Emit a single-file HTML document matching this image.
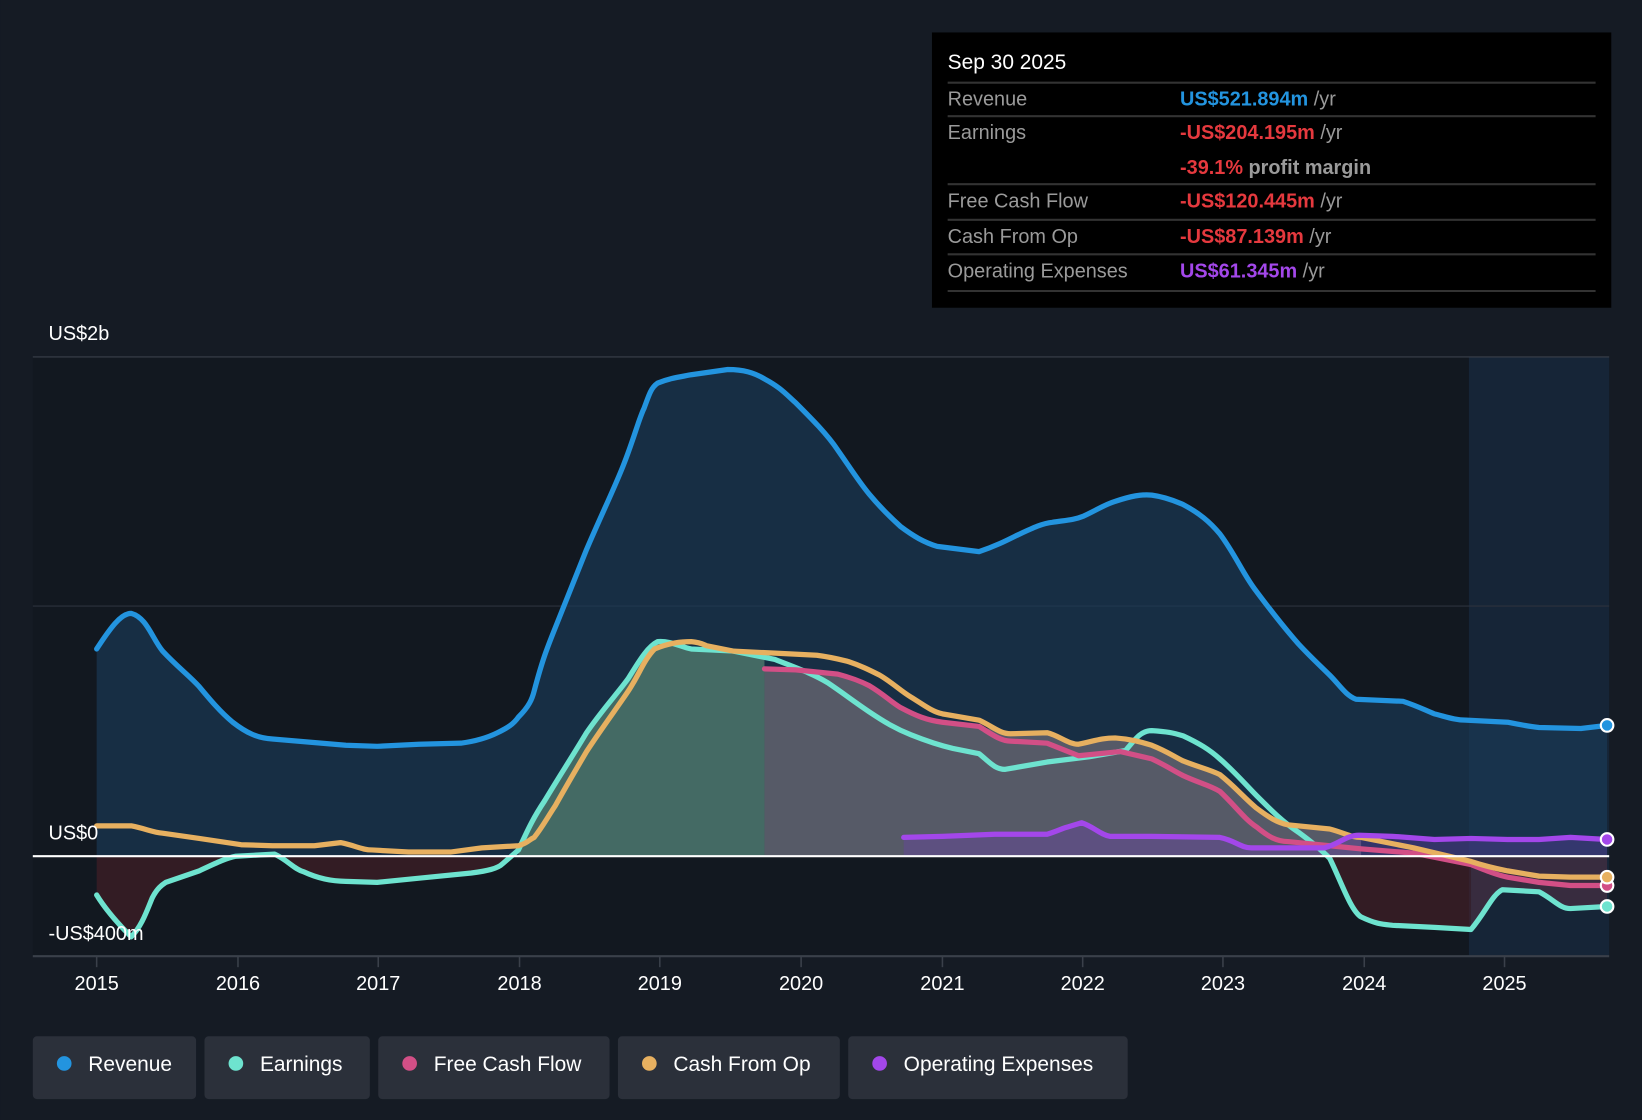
<!DOCTYPE html>
<html><head><meta charset="utf-8"><style>
html,body{margin:0;padding:0;background:#151b24;}
svg{display:block;font-family:"Liberation Sans",Arial,sans-serif;}
</style></head><body>
<svg width="1642" height="1120" viewBox="0 0 1568 1070" xmlns="http://www.w3.org/2000/svg">
<defs>
<clipPath id="above"><rect x="0" y="0" width="1568" height="818"/></clipPath>
<clipPath id="below"><rect x="0" y="818" width="1568" height="300"/></clipPath>
<clipPath id="left"><rect x="0" y="0" width="730" height="1070"/></clipPath>
<clipPath id="right"><rect x="730" y="0" width="900" height="1070"/></clipPath>
</defs>
<rect width="1568" height="1070" fill="#151b24"/>
<rect x="31" y="341" width="1506" height="572" fill="#121820"/>
<rect x="1403" y="341" width="134" height="572" fill="#162537"/>
<line x1="31" y1="341" x2="1537" y2="341" stroke="#3a404a" stroke-width="1"/>
<line x1="31" y1="579" x2="1537" y2="579" stroke="#2c323c" stroke-width="1"/>

<!-- revenue fill -->
<path d="M92,620 C105,600 115,586 125,586 C140,590 145,610 155,622 C170,638 180,645 190,656 C200,668 210,680 222,690 C235,700 245,705 260,706 L295,709 L330,712 L360,713 L400,711 L440,710 C455,708 465,705 475,700 C485,695 490,692 495,685 C505,675 508,668 510,660 C518,630 522,620 530,600 L560,525 C575,490 585,470 595,445 C605,420 610,400 615,390 C620,376 622,370 628,366 C640,361 650,360 660,358 L695,353 C710,353 720,356 730,362 C745,370 750,376 760,385 C775,400 790,415 800,430 C812,447 820,460 830,472 C840,484 850,494 860,503 C872,512 882,518 895,522 L935,527 C950,522 960,517 970,512 C985,505 995,500 1005,499 C1018,497 1025,497 1035,493 C1048,487 1055,482 1065,479 C1080,474 1090,472 1100,473 C1115,475 1125,480 1130,482 C1145,490 1155,498 1165,510 C1180,530 1188,550 1200,565 C1215,585 1225,598 1240,615 C1252,628 1262,637 1270,645 C1280,655 1285,664 1295,668 L1340,670 C1355,675 1360,678 1370,682 C1382,685 1390,688 1400,688 L1440,690 C1455,693 1460,694 1470,695 L1510,696 L1535,693 L1535,818 L92,818 Z" fill="#1a3a58" fill-opacity="0.65"/>

<!-- earnings fill -->
<g clip-path="url(#above)">
<path id="earnfill" d="M92,818 L495,812 C505,790 510,780 520,765 C535,740 545,725 560,700 C575,678 590,662 600,648 C610,632 618,618 628,613 C640,612 650,618 660,620 L700,622 L740,630 C760,638 775,643 790,652 C805,662 815,670 830,680 C845,690 855,696 870,702 C885,708 897,712 910,715 L935,720 L960,735 L1000,728 L1040,723 L1075,717 C1085,705 1090,698 1100,698 C1115,699 1120,700 1130,703 C1145,710 1155,716 1165,725 C1180,738 1190,750 1200,760 C1215,775 1225,785 1240,795 C1255,806 1262,812 1270,820 L1270,818 Z" fill="none"/>
</g>
<g clip-path="url(#left)">
<path d="M495,818 L495,812 C505,790 510,780 520,765 C535,740 545,725 560,700 C575,678 590,662 600,648 C610,632 618,618 628,613 C640,612 650,618 660,620 L700,622 L740,630 L740,818 Z" fill="#6a9d7f" fill-opacity="0.55"/>
</g>
<g clip-path="url(#right)">
<path d="M730,639 L760,640 L800,644 C815,648 822,651 830,655 C845,664 850,670 860,676 C875,684 885,688 900,690 L935,694 L965,701 L1000,700 L1030,711 L1065,705 C1080,706 1090,709 1100,712 C1115,718 1120,722 1130,727 C1145,733 1155,735 1165,740 C1180,752 1188,762 1200,772 C1212,781 1220,786 1230,788 L1270,792 L1300,800 L1300,818 L730,818 Z" fill="#8a7f85" fill-opacity="0.55"/>
</g>
<!-- opex fill -->
<path d="M863,800 L900,799 L950,797 L1000,797 C1010,794 1015,791 1020,790 L1033,786 C1045,790 1050,797 1060,799 L1100,799 L1165,800 C1180,803 1185,810 1195,810 L1265,810 C1280,806 1285,798 1298,798 L1330,799 L1370,802 L1405,801 L1440,802 L1470,802 L1500,800 L1535,802 L1535,818 L863,818 Z" fill="#6a3fb0" fill-opacity="0.35"/>
<!-- negative fills -->
<g clip-path="url(#below)">
<path d="M92,818 L92,855 C100,868 110,880 125,895 C135,885 140,870 145,858 C150,848 155,845 158,843 L190,832 C205,825 215,820 225,818 L262,816 C275,822 280,830 290,833 C305,840 320,842 330,842 L360,843 L400,839 L450,834 C465,832 475,830 480,825 L495,812 Z" fill="#4a1f28" fill-opacity="0.6"/>
<path d="M1260,810 C1268,818 1275,830 1285,850 C1292,866 1295,874 1300,876 C1315,883 1320,883 1330,884 L1370,886 L1405,888 L1405,818 Z" fill="#4a1f28" fill-opacity="0.6"/>
<path d="M1405,888 C1420,870 1425,855 1435,850 L1470,852 C1485,860 1490,868 1500,868 L1535,866 L1535,818 L1405,818 Z" fill="#5a3348" fill-opacity="0.5"/>
</g>

<!-- lines -->
<g fill="none" stroke-width="5" stroke-linejoin="round" stroke-linecap="round">
<path d="M92,620 C105,600 115,586 125,586 C140,590 145,610 155,622 C170,638 180,645 190,656 C200,668 210,680 222,690 C235,700 245,705 260,706 L295,709 L330,712 L360,713 L400,711 L440,710 C455,708 465,705 475,700 C485,695 490,692 495,685 C505,675 508,668 510,660 C518,630 522,620 530,600 L560,525 C575,490 585,470 595,445 C605,420 610,400 615,390 C620,376 622,370 628,366 C640,361 650,360 660,358 L695,353 C710,353 720,356 730,362 C745,370 750,376 760,385 C775,400 790,415 800,430 C812,447 820,460 830,472 C840,484 850,494 860,503 C872,512 882,518 895,522 L935,527 C950,522 960,517 970,512 C985,505 995,500 1005,499 C1018,497 1025,497 1035,493 C1048,487 1055,482 1065,479 C1080,474 1090,472 1100,473 C1115,475 1125,480 1130,482 C1145,490 1155,498 1165,510 C1180,530 1188,550 1200,565 C1215,585 1225,598 1240,615 C1252,628 1262,637 1270,645 C1280,655 1285,664 1295,668 L1340,670 C1355,675 1360,678 1370,682 C1382,685 1390,688 1400,688 L1440,690 C1455,693 1460,694 1470,695 L1510,696 L1535,693" stroke="#2394df"/>
<path d="M92,855 C100,868 110,880 125,895 C135,885 140,870 145,858 C150,848 155,845 158,843 L190,832 C205,825 215,820 225,818 L262,816 C275,822 280,830 290,833 C305,840 320,842 330,842 L360,843 L400,839 L450,834 C465,832 475,830 480,825 L495,812 C505,790 510,780 520,765 C535,740 545,725 560,700 C575,678 590,662 600,648 C610,632 618,618 628,613 C640,612 650,618 660,620 L700,622 L740,630 C760,638 775,643 790,652 C805,662 815,670 830,680 C845,690 855,696 870,702 C885,708 897,712 910,715 L935,720 C945,728 950,735 960,735 L1000,728 L1040,723 L1075,717 C1085,705 1090,698 1100,698 C1115,699 1120,700 1130,703 C1145,710 1155,716 1165,725 C1180,738 1190,750 1200,760 C1215,775 1225,785 1240,795 C1255,806 1262,812 1270,820 C1280,840 1290,870 1300,876 C1315,883 1320,883 1330,884 L1370,886 L1405,888 C1420,870 1425,855 1435,850 L1470,852 C1485,860 1490,868 1500,868 L1535,866" stroke="#6ee3cf"/>
<path d="M730,639 L760,640 L800,644 C815,648 822,651 830,655 C845,664 850,670 860,676 C875,684 885,688 900,690 L935,694 C945,700 955,708 965,708 L1000,710 L1030,722 L1070,718 L1100,725 C1115,732 1120,736 1130,741 C1145,748 1155,750 1165,756 C1180,770 1188,782 1200,790 C1212,800 1220,804 1230,804 L1270,808 L1300,811 L1350,815 L1405,826 C1420,832 1430,836 1440,838 L1470,843 L1500,846 L1535,846" stroke="#d24f86"/>
<path d="M92,789 L125,789 C140,792 145,795 155,796 L190,801 L230,807 L260,808 L300,808 L325,805 C340,808 345,812 355,812 L390,814 L430,814 L460,810 L495,808 C505,805 505,802 510,800 C518,790 522,782 530,770 C540,752 550,735 560,718 C575,695 590,675 600,660 C610,645 615,630 625,620 C640,614 650,613 660,613 C670,614 672,616 675,617 L700,622 L740,624 L780,626 C795,628 802,630 810,632 C822,636 830,640 840,645 C852,652 860,660 870,666 C880,672 890,680 900,682 L935,688 C948,694 955,701 965,701 L1000,700 C1012,703 1020,711 1030,711 C1045,708 1052,705 1065,705 C1080,706 1090,709 1100,712 C1115,718 1120,722 1130,727 C1145,733 1155,735 1165,740 C1180,752 1188,762 1200,772 C1212,781 1220,786 1230,788 L1270,792 C1285,796 1290,800 1300,800 L1350,810 L1405,823 C1420,828 1430,830 1440,832 L1470,837 L1500,838 L1535,838" stroke="#e7b060"/>
<path d="M863,800 L900,799 L950,797 L1000,797 C1010,794 1015,791 1020,790 L1033,786 C1045,790 1050,797 1060,799 L1100,799 L1165,800 C1180,803 1185,810 1195,810 L1265,810 C1280,806 1285,798 1298,798 L1330,799 L1370,802 L1405,801 L1440,802 L1470,802 L1500,800 L1535,802" stroke="#a347ea"/>
</g>
<line x1="31" y1="818" x2="1537" y2="818" stroke="#ffffff" stroke-width="2"/>
<line x1="31" y1="913.5" x2="1537" y2="913.5" stroke="#3a404a" stroke-width="2"/>
<g fill="none" stroke="#fff" stroke-width="2">
<circle cx="1535" cy="693" r="6" fill="#2394df"/>
<circle cx="1535" cy="802" r="6" fill="#a347ea"/>
<circle cx="1535" cy="846" r="6" fill="#d24f86"/>
<circle cx="1535" cy="838" r="6" fill="#e7b060"/>
<circle cx="1535" cy="866" r="6" fill="#6ee3cf"/>
</g>
<g stroke="#3a404a" stroke-width="1.5">
<line x1="92" y1="914" x2="92" y2="924"/><line x1="227" y1="914" x2="227" y2="924"/><line x1="361" y1="914" x2="361" y2="924"/><line x1="496" y1="914" x2="496" y2="924"/><line x1="630" y1="914" x2="630" y2="924"/><line x1="765" y1="914" x2="765" y2="924"/><line x1="900" y1="914" x2="900" y2="924"/><line x1="1034" y1="914" x2="1034" y2="924"/><line x1="1168" y1="914" x2="1168" y2="924"/><line x1="1303" y1="914" x2="1303" y2="924"/><line x1="1437" y1="914" x2="1437" y2="924"/>
</g>
<g fill="#fff" font-size="19" text-anchor="middle">
<text x="92" y="946">2015</text><text x="227" y="946">2016</text><text x="361" y="946">2017</text><text x="496" y="946">2018</text><text x="630" y="946">2019</text><text x="765" y="946">2020</text><text x="900" y="946">2021</text><text x="1034" y="946">2022</text><text x="1168" y="946">2023</text><text x="1303" y="946">2024</text><text x="1437" y="946">2025</text>
</g>
<g fill="#fff" font-size="19">
<text x="46" y="325">US$2b</text>
<text x="46" y="802">US$0</text>
<text x="46" y="898">-US$400m</text>
</g>

<!-- tooltip -->
<rect x="890" y="31" width="649" height="263" fill="#000"/>
<text x="905" y="66" fill="#fff" font-size="20">Sep 30 2025</text>
<g stroke="#333" stroke-width="2">
<line x1="905" y1="79" x2="1524" y2="79"/><line x1="905" y1="111" x2="1524" y2="111"/><line x1="905" y1="176" x2="1524" y2="176"/><line x1="905" y1="210" x2="1524" y2="210"/><line x1="905" y1="243" x2="1524" y2="243"/><line x1="905" y1="278" x2="1524" y2="278"/>
</g>
<g font-size="19" fill="#9a9a9a">
<text x="905" y="101">Revenue</text>
<text x="905" y="133">Earnings</text>
<text x="905" y="198">Free Cash Flow</text>
<text x="905" y="232">Cash From Op</text>
<text x="905" y="265">Operating Expenses</text>
<text x="1127" y="101"><tspan fill="#2394df" font-weight="bold">US$521.894m</tspan> /yr</text>
<text x="1127" y="133"><tspan fill="#e5393e" font-weight="bold">-US$204.195m</tspan> /yr</text>
<text x="1127" y="166"><tspan fill="#e5393e" font-weight="bold">-39.1%</tspan> <tspan font-weight="bold">profit margin</tspan></text>
<text x="1127" y="198"><tspan fill="#e5393e" font-weight="bold">-US$120.445m</tspan> /yr</text>
<text x="1127" y="232"><tspan fill="#e5393e" font-weight="bold">-US$87.139m</tspan> /yr</text>
<text x="1127" y="265"><tspan fill="#a347ea" font-weight="bold">US$61.345m</tspan> /yr</text>
</g>

<!-- legend -->
<g fill="#2b303a">
<rect x="31" y="990" width="156" height="60" rx="4"/>
<rect x="195" y="990" width="158" height="60" rx="4"/>
<rect x="361" y="990" width="221" height="60" rx="4"/>
<rect x="590" y="990" width="212" height="60" rx="4"/>
<rect x="810" y="990" width="267" height="60" rx="4"/>
</g>
<circle cx="61" cy="1016" r="7" fill="#2394df"/>
<circle cx="225" cy="1016" r="7" fill="#6ee3cf"/>
<circle cx="391" cy="1016" r="7" fill="#d24f86"/>
<circle cx="620" cy="1016" r="7" fill="#e7b060"/>
<circle cx="840" cy="1016" r="7" fill="#a347ea"/>
<g fill="#fff" font-size="20">
<text x="84" y="1023">Revenue</text>
<text x="248" y="1023">Earnings</text>
<text x="414" y="1023">Free Cash Flow</text>
<text x="643" y="1023">Cash From Op</text>
<text x="863" y="1023">Operating Expenses</text>
</g>
</svg>
</body></html>
